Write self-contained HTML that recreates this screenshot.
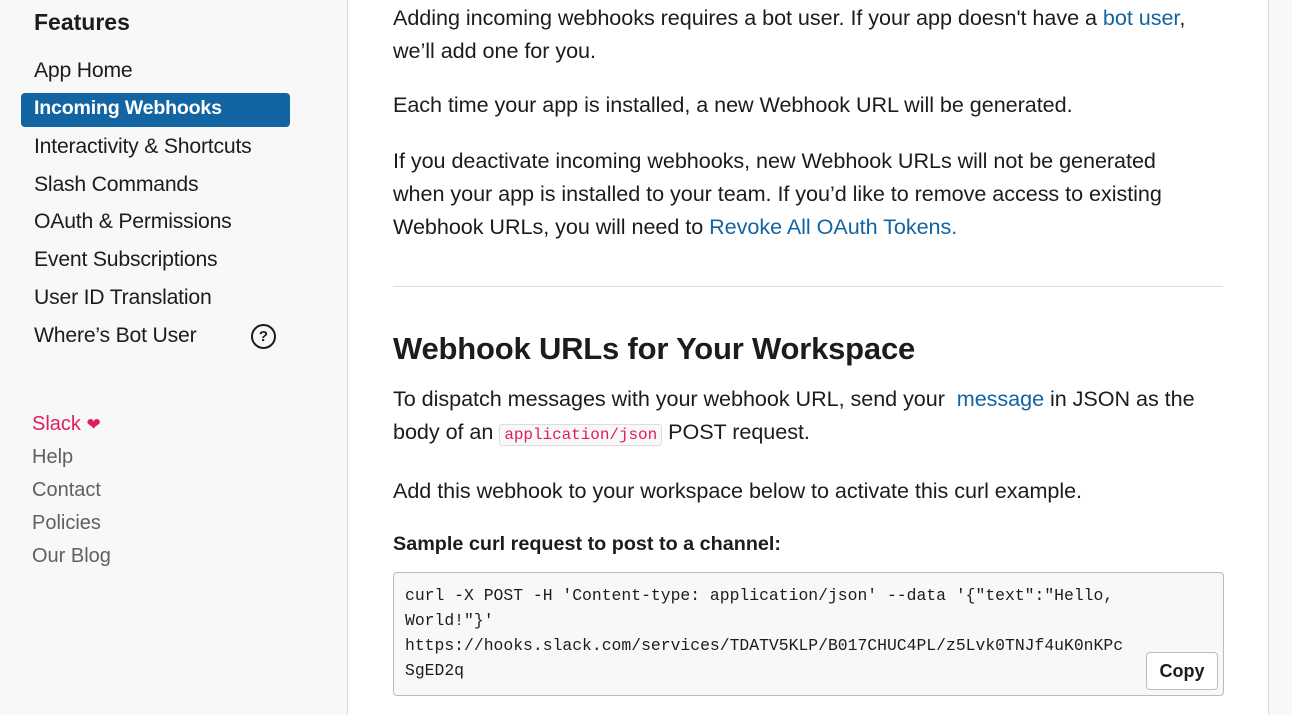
<!DOCTYPE html>
<html><head><meta charset="utf-8"><style>
*{margin:0;padding:0;box-sizing:border-box}
body{width:1292px;height:715px;overflow:hidden;background:#fff;font-family:"Liberation Sans",sans-serif;color:#1d1c1d;position:relative}
.side{position:absolute;left:0;top:0;width:348px;height:715px;background:#f8f8f8;border-right:1px solid #ddd}
.rs{position:absolute;left:1268px;top:0;width:24px;height:715px;background:#f8f8f8;border-left:1px solid #ddd}
.a{position:absolute;white-space:nowrap}
.nav{font-size:21.2px;left:34px;letter-spacing:-0.2px}
.foot{font-size:20px;left:32px;color:#616061}
.p{font-size:21.6px;left:393px;line-height:33px;white-space:nowrap;letter-spacing:-0.05px}
a{color:#1264a3;text-decoration:none}
code{font-family:"Liberation Mono",monospace;font-size:16px;color:#e01e5a;background:#f8f8f8;border:1px solid #ddd;border-radius:3px;padding:1px 4px}
</style></head><body>
<div class="side"></div>
<div class="rs"></div>
<div class="a" style="left:34px;top:9px;font-size:23px;font-weight:bold">Features</div>
<div class="a nav" style="top:59px">App Home</div>
<div class="a" style="left:21px;top:93px;width:269px;height:34px;background:#1264a3;border-radius:4px"></div>
<div class="a nav" style="top:97px;color:#fff;font-weight:bold;font-size:19.6px">Incoming Webhooks</div>
<div class="a nav" style="top:135px">Interactivity &amp; Shortcuts</div>
<div class="a nav" style="top:173px">Slash Commands</div>
<div class="a nav" style="top:210px">OAuth &amp; Permissions</div>
<div class="a nav" style="top:248px">Event Subscriptions</div>
<div class="a nav" style="top:286px">User ID Translation</div>
<div class="a nav" style="top:324px">Where’s Bot User</div>
<div class="a" style="left:251px;top:324px;width:25px;height:25px;border:2px solid #1d1c1d;border-radius:50%;font-size:15px;font-weight:bold;text-align:center;line-height:21px">?</div>
<div class="a foot" style="top:413px;color:#e01e5a">Slack <span style="font-size:17px">❤</span></div>
<div class="a foot" style="top:446px">Help</div>
<div class="a foot" style="top:479px">Contact</div>
<div class="a foot" style="top:512px">Policies</div>
<div class="a foot" style="top:545px">Our Blog</div>

<div class="a p" style="top:1px">Adding incoming webhooks requires a bot user. If your app doesn't have a <a>bot user</a>,<br>we’ll add one for you.</div>
<div class="a p" style="top:88px">Each time your app is installed, a new Webhook URL will be generated.</div>
<div class="a p" style="top:144px">If you deactivate incoming webhooks, new Webhook URLs will not be generated<br>when your app is installed to your team. If you’d like to remove access to existing<br>Webhook URLs, you will need to <a>Revoke All OAuth Tokens.</a></div>
<div class="a" style="left:393px;top:286px;width:830px;height:1px;background:#ddd"></div>
<div class="a" style="left:393px;top:331px;font-size:31px;font-weight:bold;letter-spacing:-0.2px">Webhook URLs for Your Workspace</div>
<div class="a p" style="top:382px">To dispatch messages with your webhook URL, send your &nbsp;<a>message</a> in JSON as the<br>body of an <code>application/json</code> POST request.</div>
<div class="a p" style="top:474px">Add this webhook to your workspace below to activate this curl example.</div>
<div class="a" style="left:393px;top:533px;font-size:19.8px;font-weight:bold">Sample curl request to post to a channel:</div>
<div class="a" style="left:393px;top:572px;width:831px;height:124px;background:#f8f8f8;border:1px solid #bbb;border-radius:4px"></div>
<div class="a" style="left:405px;top:583px;font-family:'Liberation Mono',monospace;font-size:16.4px;line-height:25px;white-space:pre">curl -X POST -H 'Content-type: application/json' --data '{"text":"Hello,
World!"}'
https://hooks.slack.com/services/TDATV5KLP/B017CHUC4PL/z5Lvk0TNJf4uK0nKPc
SgED2q</div>
<div class="a" style="left:1146px;top:652px;width:72px;height:38px;background:#fff;border:1px solid #bbb;border-radius:4px;font-size:18px;font-weight:bold;text-align:center;line-height:36px">Copy</div>
</body></html>
